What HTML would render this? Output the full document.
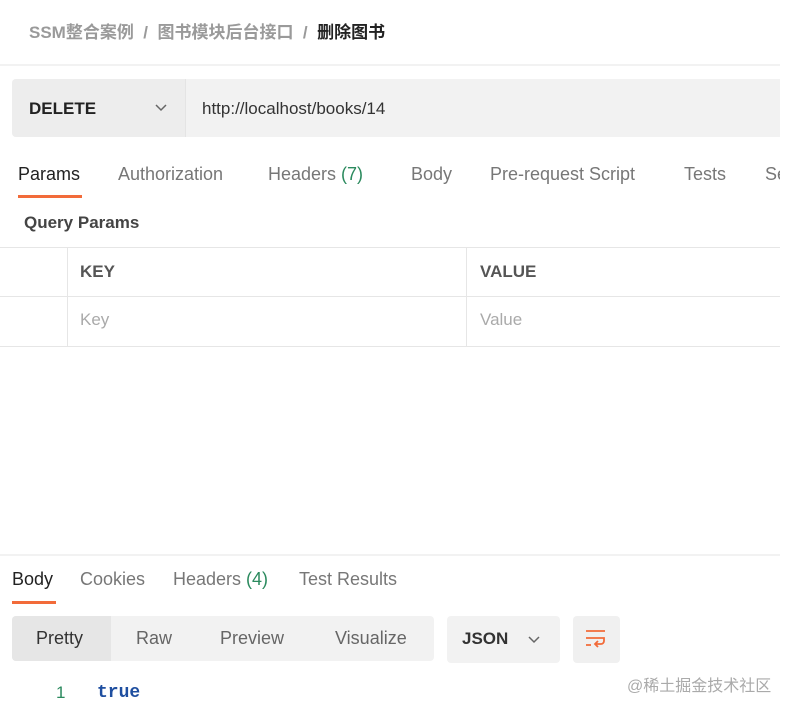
<!DOCTYPE html><html><head><meta charset="utf-8"><style>
body{margin:0;width:795px;height:711px;background:#fff;font-family:"Liberation Sans","Noto Sans CJK SC",sans-serif;position:relative;overflow:hidden;color:#212121}
.a{position:absolute;white-space:nowrap}
.t{position:absolute;white-space:nowrap;font-size:18px;color:#777;top:164px}
.b{position:absolute;white-space:nowrap;font-size:18px;color:#777;top:569px}
</style></head><body>
<div class="a" style="left:29px;top:18px;font-size:17px;color:#9a9a9a;font-weight:bold">SSM整合案例 &nbsp;/&nbsp; 图书模块后台接口 &nbsp;/&nbsp; <span style="color:#222">删除图书</span></div>
<div class="a" style="left:0;top:64px;width:780px;height:2px;background:#f2f2f2"></div>
<div class="a" style="left:12px;top:79px;width:768px;height:58px;background:#f2f2f2;border-radius:4px 0 0 4px"></div>
<div class="a" style="left:12px;top:79px;width:173px;height:58px;background:#ededed;border-radius:4px 0 0 4px;border-right:1px solid #e4e4e4"></div>
<div class="a" style="left:29px;top:99px;font-size:17px;font-weight:bold;color:#222">DELETE</div>
<svg class="a" style="left:155px;top:104px" width="12" height="8" viewBox="0 0 12 8"><path d="M1 1l5 5 5-5" fill="none" stroke="#666" stroke-width="1.5"/></svg>
<div class="a" style="left:202px;top:99px;font-size:17px;color:#333">http://localhost/books/14</div>
<div class="a" style="left:0;top:150px;width:780px;height:40px;overflow:hidden">
<div class="t" style="left:18px;top:14px;color:#222">Params</div>
<div class="t" style="left:118px;top:14px">Authorization</div>
<div class="t" style="left:268px;top:14px">Headers <span style="color:#2b8a5e">(7)</span></div>
<div class="t" style="left:411px;top:14px">Body</div>
<div class="t" style="left:490px;top:14px">Pre-request Script</div>
<div class="t" style="left:684px;top:14px">Tests</div>
<div class="t" style="left:765px;top:14px">Se</div>
</div>
<div class="a" style="left:18px;top:195px;width:64px;height:3px;background:#f26b3a"></div>
<div class="a" style="left:24px;top:213px;font-size:17px;color:#444;font-weight:bold">Query Params</div>
<div class="a" style="left:0;top:247px;width:780px;height:1px;background:#e6e6e6"></div>
<div class="a" style="left:0;top:296px;width:780px;height:1px;background:#e6e6e6"></div>
<div class="a" style="left:0;top:346px;width:780px;height:1px;background:#e6e6e6"></div>
<div class="a" style="left:67px;top:247px;width:1px;height:100px;background:#e6e6e6"></div>
<div class="a" style="left:466px;top:247px;width:1px;height:100px;background:#e6e6e6"></div>
<div class="a" style="left:80px;top:262px;font-size:17px;color:#555;font-weight:bold">KEY</div>
<div class="a" style="left:480px;top:262px;font-size:17px;color:#555;font-weight:bold">VALUE</div>
<div class="a" style="left:80px;top:310px;font-size:17px;color:#aaa">Key</div>
<div class="a" style="left:480px;top:310px;font-size:17px;color:#aaa">Value</div>
<div class="a" style="left:0;top:554px;width:780px;height:2px;background:#f2f2f2"></div>
<div class="b" style="left:12px;color:#222">Body</div>
<div class="b" style="left:80px">Cookies</div>
<div class="b" style="left:173px">Headers <span style="color:#2b8a5e">(4)</span></div>
<div class="b" style="left:299px">Test Results</div>
<div class="a" style="left:12px;top:601px;width:44px;height:3px;background:#f26b3a"></div>
<div class="a" style="left:12px;top:616px;width:422px;height:45px;background:#f2f2f2;border-radius:4px"></div>
<div class="a" style="left:12px;top:616px;width:99px;height:45px;background:#e6e6e6;border-radius:4px 0 0 4px"></div>
<div class="a" style="left:36px;top:628px;font-size:18px;color:#333">Pretty</div>
<div class="a" style="left:136px;top:628px;font-size:18px;color:#666">Raw</div>
<div class="a" style="left:220px;top:628px;font-size:18px;color:#666">Preview</div>
<div class="a" style="left:335px;top:628px;font-size:18px;color:#666">Visualize</div>
<div class="a" style="left:447px;top:616px;width:113px;height:47px;background:#f2f2f2;border-radius:4px"></div>
<div class="a" style="left:462px;top:629px;font-size:17px;color:#333;font-weight:bold">JSON</div>
<svg class="a" style="left:528px;top:636px" width="12" height="8" viewBox="0 0 12 8"><path d="M1 1l5 5 5-5" fill="none" stroke="#666" stroke-width="1.5"/></svg>
<div class="a" style="left:573px;top:616px;width:47px;height:47px;background:#f0f0f0;border-radius:4px"></div>
<svg class="a" style="left:584px;top:628px" width="24" height="22" viewBox="0 0 24 22"><g fill="none" stroke="#f26b3a" stroke-width="1.8"><path d="M2 3h19M2 10h18v3a3 3 0 0 1-3 3h-6M14 13l-3 3 3 3M2 17h5"/></g></svg>
<div class="a" style="left:56px;top:683px;font-size:17px;color:#2b8a5e">1</div>
<div class="a" style="left:97px;top:683px;font-size:18px;color:#1f4fa0;font-family:'Liberation Mono',monospace;font-weight:bold">true</div>
<div class="a" style="left:627px;top:672px;font-size:16px;color:#aaa">@稀土掘金技术社区</div>
</body></html>
